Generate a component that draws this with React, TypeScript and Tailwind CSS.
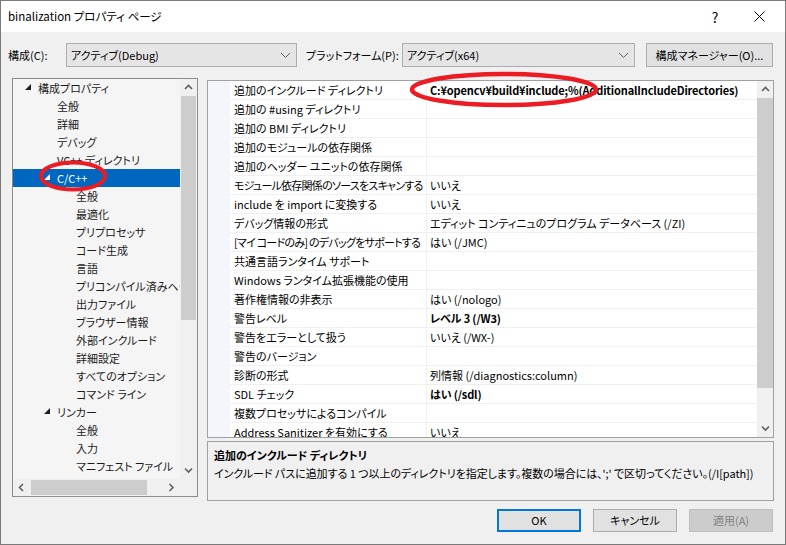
import React from "react";

const FONT =
  "font-['Noto_Sans_CJK_JP','Noto_Sans',sans-serif] [font-feature-settings:'palt']";

type TreeItem = { t: string; l: number; open?: boolean; sel?: boolean };

const tree: TreeItem[] = [
  { t: "構成プロパティ", l: 0, open: true },
  { t: "全般", l: 1 },
  { t: "詳細", l: 1 },
  { t: "デバッグ", l: 1 },
  { t: "VC++ ディレクトリ", l: 1 },
  { t: "C/C++", l: 1, open: true, sel: true },
  { t: "全般", l: 2 },
  { t: "最適化", l: 2 },
  { t: "プリプロセッサ", l: 2 },
  { t: "コード生成", l: 2 },
  { t: "言語", l: 2 },
  { t: "プリコンパイル済みヘッダー", l: 2 },
  { t: "出力ファイル", l: 2 },
  { t: "ブラウザー情報", l: 2 },
  { t: "外部インクルード", l: 2 },
  { t: "詳細設定", l: 2 },
  { t: "すべてのオプション", l: 2 },
  { t: "コマンド ライン", l: 2 },
  { t: "リンカー", l: 1, open: true },
  { t: "全般", l: 2 },
  { t: "入力", l: 2 },
  { t: "マニフェスト ファイル", l: 2 },
  { t: "デバッグ", l: 2 },
];

const pad = ["pl-[12px]", "pl-[31px]", "pl-[50px]"];

// name, value, bold, name tracking
const props: [string, string, boolean?, string?][] = [
  ["追加のインクルード ディレクトリ", "C:¥opencv¥build¥include;%(AdditionalIncludeDirectories)", true],
  ["追加の #using ディレクトリ", ""],
  ["追加の BMI ディレクトリ", ""],
  ["追加のモジュールの依存関係", ""],
  ["追加のヘッダー ユニットの依存関係", ""],
  ["モジュール依存関係のソースをスキャンする", "いいえ", false, "tracking-[-0.75px]"],
  ["include を import に変換する", "いいえ"],
  ["デバッグ情報の形式", "エディット コンティニュのプログラム データベース (/ZI)"],
  ["[マイ コードのみ] のデバッグをサポートする", "はい (/JMC)", false, "tracking-[-0.75px]"],
  ["共通言語ランタイム サポート", ""],
  ["Windows ランタイム拡張機能の使用", ""],
  ["著作権情報の非表示", "はい (/nologo)"],
  ["警告レベル", "レベル 3 (/W3)", true],
  ["警告をエラーとして扱う", "いいえ (/WX-)"],
  ["警告のバージョン", ""],
  ["診断の形式", "列情報 (/diagnostics:column)"],
  ["SDL チェック", "はい (/sdl)", true],
  ["複数プロセッサによるコンパイル", ""],
  ["Address Sanitizer を有効にする", "いいえ"],
];

function Chevron({ dir }: { dir: "up" | "down" | "left" | "right" }) {
  const pts = {
    up: "1,5 4.5,1.5 8,5",
    down: "1,1.5 4.5,5 8,1.5",
    left: "5,1 1.5,4.5 5,8",
    right: "1.5,1 5,4.5 1.5,8",
  }[dir];
  const wide = dir === "up" || dir === "down";
  return (
    <svg width={wide ? 9 : 7} height={wide ? 7 : 9} viewBox={wide ? "0 0 9 7" : "0 0 7 9"}>
      <polyline points={pts} fill="none" stroke="#606060" strokeWidth="1.6" />
    </svg>
  );
}

function Triangle({ white }: { white?: boolean }) {
  return (
    <svg width="6" height="6" viewBox="0 0 6 6">
      <polygon points="6,0 6,6 0,6" fill={white ? "#ffffff" : "#1e1e1e"} />
    </svg>
  );
}

function Combo({ text, w }: { text: string; w: string }) {
  return (
    <div
      className={`${w} shrink-0 h-[24px] bg-[#e5e5e5] border border-[#adadad] flex items-center justify-between pl-[4px] pr-[5px] whitespace-nowrap`}
    >
      <span>{text}</span>
      <svg width="11" height="7" viewBox="0 0 11 7">
        <polyline points="1,1 5.5,5.5 10,1" fill="none" stroke="#606060" strokeWidth="1" />
      </svg>
    </div>
  );
}

function Tree() {
  return (
    <div className="w-[186px] shrink-0 h-[419px] border border-[#8c8c8c] bg-[#f5f5f5] flex flex-col">
      <div className="flex h-[400px]">
        <div className="w-[167px] shrink-0 overflow-hidden">
          {tree.map((it, i) => (
            <div
              key={i}
              className={`h-[18px] flex items-center whitespace-nowrap ${pad[it.l]} ${
                it.sel ? "bg-[#0067c0] text-white" : "text-[#1b1b1b]"
              }`}
            >
              <span className="w-[13px] shrink-0 flex items-center justify-start pb-[2px]">
                {it.open ? <Triangle white={it.sel} /> : null}
              </span>
              <span className="shrink-0">{it.t}</span>
            </div>
          ))}
        </div>
        <div className="w-[17px] bg-[#f0f0f0] flex flex-col">
          <div className="h-[17px] flex items-center justify-center">
            <Chevron dir="up" />
          </div>
          <div className="h-[224px] mx-[1px] bg-[#cdcdcd]" />
          <div className="flex-1" />
          <div className="h-[17px] flex items-center justify-center">
            <Chevron dir="down" />
          </div>
        </div>
      </div>
      <div className="h-[17px] flex bg-[#f0f0f0]">
        <div className="w-[17px] flex items-center justify-center">
          <Chevron dir="left" />
        </div>
        <div className="flex-1 flex items-stretch py-[1px]">
          <div className="ml-[1px] w-[116px] bg-[#cdcdcd]" />
        </div>
        <div className="w-[17px] flex items-center justify-center">
          <Chevron dir="right" />
        </div>
        <div className="w-[17px]" />
      </div>
    </div>
  );
}

function Grid() {
  return (
    <div className="w-[567px] h-[358px] border border-[#a0a0a0] bg-white flex overflow-hidden">
      <div className="w-[22px] shrink-0 bg-[#f3f6fb]" />
      <div className="w-[527px] shrink-0 overflow-hidden">
        {props.map(([n, v, b, tr], i) => (
          <div key={i} className="h-[19px] flex border-b border-[#f0f0f0] text-black whitespace-nowrap">
            <div
              className={`w-[197px] shrink-0 pl-[4px] border-r border-[#f0f0f0] flex items-center overflow-hidden ${tr ?? ""}`}
            >
              {n}
            </div>
            <div
              className={`flex-1 min-w-0 pl-[3px] flex items-center overflow-hidden ${
                b ? "font-bold tracking-[-0.15px]" : ""
              }`}
            >
              {v}
            </div>
          </div>
        ))}
      </div>
      <div className="w-[16px] shrink-0 bg-[#f0f0f0] flex flex-col">
        <div className="h-[17px] flex items-center justify-center">
          <Chevron dir="up" />
        </div>
        <div className="h-[290px] bg-[#cdcdcd]" />
        <div className="flex-1" />
        <div className="h-[17px] flex items-center justify-center">
          <Chevron dir="down" />
        </div>
      </div>
    </div>
  );
}

function Btn({ children, kind }: { children: React.ReactNode; kind?: "default" | "disabled" }) {
  const cls =
    kind === "default"
      ? "border-2 border-[#0078d7] bg-[#e1e1e1] text-black"
      : kind === "disabled"
      ? "border border-[#bfbfbf] bg-[#cccccc] text-[#838383]"
      : "border border-[#adadad] bg-[#e1e1e1] text-black";
  return (
    <div className={`w-[84px] h-[23px] flex items-center justify-center ${cls}`}>{children}</div>
  );
}

export default function App() {
  return (
    <div
      className={`relative w-[786px] h-[545px] border border-[#7a7a7a] bg-[#f0f0f0] flex flex-col overflow-hidden text-[11px] leading-none ${FONT}`}
    >
      {/* title bar */}
      <div className="h-[31px] bg-white flex items-center pl-[7px] text-black text-[11.5px]">
        <span className="flex-1">binalization プロパティ ページ</span>
        <span className="w-[12px] text-[14px] mr-[33px] text-center">?</span>
        <svg width="11" height="11" viewBox="0 0 11 11" className="mr-[20px]">
          <line x1="0.5" y1="0.5" x2="10.5" y2="10.5" stroke="#000" strokeWidth="1" />
          <line x1="10.5" y1="0.5" x2="0.5" y2="10.5" stroke="#000" strokeWidth="1" />
        </svg>
      </div>

      {/* configuration row */}
      <div className="mt-[11px] h-[24px] flex items-center pl-[7px] text-black whitespace-nowrap">
        <span className="w-[58px] shrink-0">構成(C):</span>
        <Combo text="アクティブ(Debug)" w="w-[231px]" />
        <span className="ml-[9px] w-[96px] shrink-0">プラットフォーム(P):</span>
        <Combo text="アクティブ(x64)" w="w-[233px]" />
        <div className="ml-[11px] w-[127px] shrink-0 h-[24px] border border-[#adadad] bg-[#e1e1e1] flex items-center justify-center">
          構成マネージャー(O)...
        </div>
      </div>

      {/* main */}
      <div className="mt-[11px] flex items-start pl-[11px]">
        <Tree />
        <div className="ml-[9px] mt-[2px] flex flex-col">
          <Grid />
          <div className="mt-[3px] w-[567px] h-[60px] border border-[#a0a0a0] bg-[#f0f0f0] pl-[6px] pt-[5px] text-black">
            <div className="font-bold h-[17px] flex items-center">追加のインクルード ディレクトリ</div>
            <div className="h-[19px] flex items-center whitespace-nowrap tracking-[-0.05px]">
              インクルード パスに追加する 1 つ以上のディレクトリを指定します。複数の場合には、';' で区切ってください。(/I[path])
            </div>
          </div>
        </div>
      </div>

      {/* buttons */}
      <div className="mt-[8px] flex justify-end gap-[12px] pr-[12px]">
        <Btn kind="default">OK</Btn>
        <Btn>キャンセル</Btn>
        <Btn kind="disabled">適用(A)</Btn>
      </div>

      {/* red annotation ellipses */}
      <svg className="absolute left-0 top-0 pointer-events-none" width="786" height="545">
        <ellipse cx="72" cy="175" rx="32" ry="13.5" fill="none" stroke="#ec1c24" strokeWidth="4" />
        <ellipse cx="503" cy="88.5" rx="92" ry="15.5" fill="none" stroke="#ec1c24" strokeWidth="4.5" />
      </svg>
    </div>
  );
}
